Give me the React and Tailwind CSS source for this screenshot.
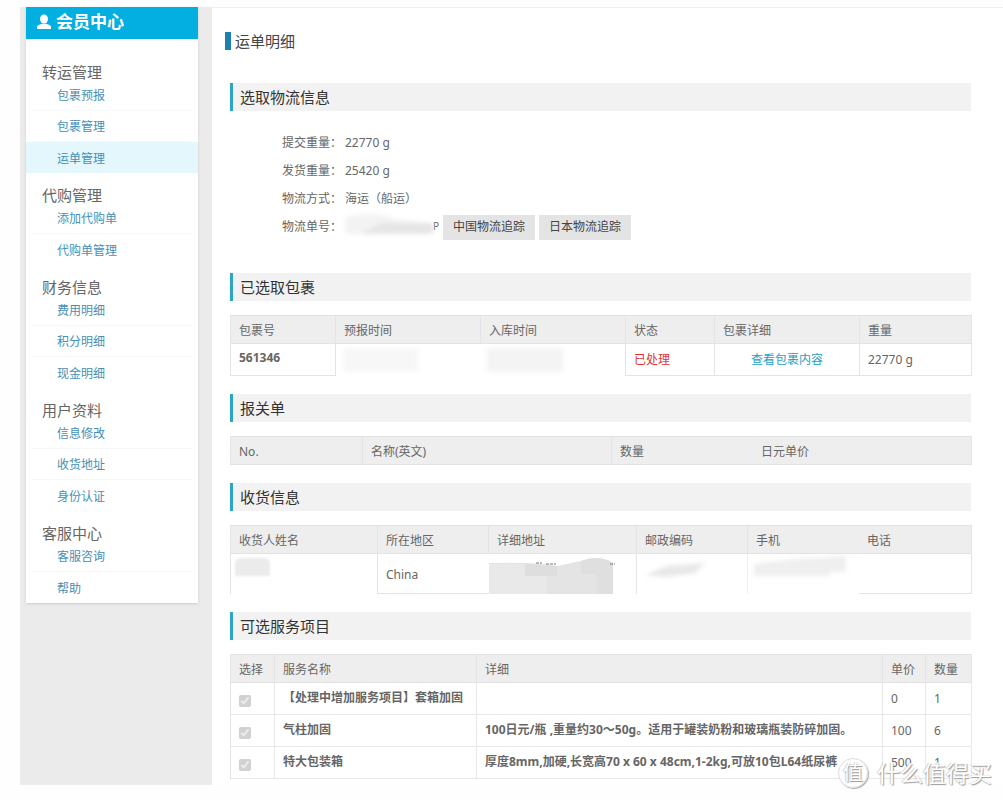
const menu = [
  { title: '转运管理', items: ['包裹预报', '包裹管理', '运单管理'] },
  { title: '代购管理', items: ['添加代购单', '代购单管理'] },
  { title: '财务信息', items: ['费用明细', '积分明细', '现金明细'] },
  { title: '用户资料', items: ['信息修改', '收货地址', '身份认证'] },
  { title: '客服中心', items: ['客服咨询', '帮助'] }
]

const services = [
  { name: '【处理中增加服务项目】套箱加固', detail: '', price: 0, count: 1 },
  { name: '气柱加固', detail: '100日元/瓶 ,重量约30～50g。适用于罐装奶粉和玻璃瓶装防碎加固。', price: 100, count: 6 },
  { name: '特大包装箱', detail: '厚度8mm,加硬,长宽高70 x 60 x 48cm,1-2kg,可放10包L64纸尿裤', price: 500, count: 1 }
]

export default function App() {
  return (
    <div className="relative min-h-screen overflow-hidden bg-[#fefefe] pt-[7px] pl-5 text-xs text-[#666] font-['Noto_Sans','Noto_Sans_CJK_SC',sans-serif]">
      <div className="flex">
        <Sidebar />
        <main className="min-w-0 flex-1 border-t border-[#f0f0f0] bg-white pr-8 pb-[6px] pl-[18px]">
          <h1 className="-ml-[5px] mt-6 flex h-[18px] items-center gap-1 text-[15px] text-[#444]">
            <span className="h-[18px] w-[6px] bg-[#1c80b0]" />
            运单明细
          </h1>

          <SectionTitle className="mt-[33px]">选取物流信息</SectionTitle>
          <Logistics />

          <SectionTitle className="mt-8">已选取包裹</SectionTitle>
          <Packages />

          <SectionTitle className="mt-[18px]">报关单</SectionTitle>
          <table className="mt-[14px] w-full table-fixed border-separate border-spacing-0 border-l border-[#e4e4e4]">
            <thead>
              <tr>
                <Th className="w-[132px]">No.</Th>
                <Th className="w-[249px]">名称(英文)</Th>
                <Th className="w-[141px] border-r-transparent">数量</Th>
                <Th className="w-[219px]">日元单价</Th>
              </tr>
            </thead>
          </table>

          <SectionTitle className="mt-[18px]">收货信息</SectionTitle>
          <Receiver />

          <SectionTitle className="mt-[18px]">可选服务项目</SectionTitle>
          <Services />
        </main>
      </div>
      <Watermark />
    </div>
  )
}

function Sidebar() {
  return (
    <aside className="w-48 shrink-0 bg-[#ebebeb] pr-[14px] pl-[6px]">
      <div className="bg-white shadow-sm">
        <div className="flex h-8 items-center gap-1 bg-[#03aee0] pb-[2px] pl-[10px] text-[17px] font-bold text-white">
          <svg viewBox="0 0 16 16" className="h-4 w-4" fill="currentColor" aria-hidden="true">
            <ellipse cx="8" cy="5" rx="4" ry="4.500" />
            <path d="M1 15v-2c0-1.500 2-2.400 5-3.200h4c3 .8 5 1.700 5 3.200v2z" />
          </svg>
          会员中心
        </div>
        <nav className="pt-[11px]">
          {menu.map((group) => (
            <section key={group.title}>
              <h2 className="pt-[15px] pl-4 text-[15px] leading-[15px] text-[#666]">{group.title}</h2>
              <ul>
                {group.items.map((item, index) => (
                  <li key={item} className={item === '运单管理' ? 'bg-[#e3f7fd]' : ''}>
                    <a
                      href="#"
                      className={`mx-[6px] flex h-[31px] items-center pt-[2px] pl-[25px] text-[#468fb5] ${
                        index < group.items.length - 1 ? 'border-b border-[#f6f8f9]' : ''
                      }`}
                    >
                      {item}
                    </a>
                  </li>
                ))}
              </ul>
            </section>
          ))}
        </nav>
      </div>
    </aside>
  )
}

function SectionTitle({ className, children }) {
  return (
    <h2 className={`flex h-7 items-center border-l-[3px] border-[#2da5c4] bg-[#f2f2f2] pl-[7px] text-[15px] text-[#333] ${className}`}>
      {children}
    </h2>
  )
}

function Logistics() {
  return (
    <dl className="mt-[18px] grid auto-rows-[28px] grid-cols-[63px_1fr] items-center pl-[52px]">
      <dt>提交重量：</dt>
      <dd>22770 g</dd>
      <dt>发货重量：</dt>
      <dd>25420 g</dd>
      <dt>物流方式：</dt>
      <dd>海运（船运）</dd>
      <dt>物流单号：</dt>
      <dd className="flex items-center gap-1">
        <span className="flex items-center">
          <svg viewBox="0 0 88 26" className="h-[26px] w-[88px] overflow-visible blur-[2px]" aria-hidden="true">
            <path d="M0 4Q25-4 48 4Q60 7 88 9V20H0z" fill="#f3f3f3" />
            <path d="M18 18L36 9H88V20H18z" fill="#e6e6e6" />
          </svg>
          <span className="w-[6px] text-[10px]">P</span>
        </span>
        <button type="button" className="h-[25px] bg-[#e4e4e4] px-[10px] text-[#444]">中国物流追踪</button>
        <button type="button" className="h-[25px] bg-[#e4e4e4] px-[10px] text-[#444]">日本物流追踪</button>
      </dd>
    </dl>
  )
}

function Th({ className, children }) {
  return (
    <th className={`h-[29px] border-y border-r border-y-[#e2e2e2] border-r-[#e4e4e4] bg-[#eee] px-2 pt-[2px] text-left font-normal whitespace-nowrap ${className}`}>
      {children}
    </th>
  )
}

function Packages() {
  return (
    <table className="mt-[14px] w-full table-fixed border-separate border-spacing-0 border-l border-[#e4e4e4]">
      <thead>
        <tr>
          <Th className="w-[105px]">包裹号</Th>
          <Th className="w-[145px]">预报时间</Th>
          <Th className="w-[145px]">入库时间</Th>
          <Th className="w-[89px]">状态</Th>
          <Th className="w-[145px]">包裹详细</Th>
          <Th className="w-[112px]">重量</Th>
        </tr>
      </thead>
      <tbody>
        <tr className="h-8">
          <td className="border-r border-b border-[#e4e4e4] px-2 pb-1 font-bold">561346</td>
          <td className="px-2">
            <div className="h-6 w-[74px] bg-[#f7f7f7] blur-[2px]" />
          </td>
          <td className="border-r border-[#e4e4e4] px-[6px]">
            <div className="h-6 w-[76px] bg-[#f5f4f4] blur-[2px]" />
          </td>
          <td className="border-r border-b border-[#e4e4e4] px-2 text-[#dd3333]">已处理</td>
          <td className="border-r border-b border-[#e4e4e4] text-center">
            <a href="#" className="text-[#1d9fc9]">查看包裹内容</a>
          </td>
          <td className="border-r border-b border-[#e4e4e4] px-2">22770 g</td>
        </tr>
      </tbody>
    </table>
  )
}

function Receiver() {
  return (
    <table className="mt-[14px] w-full table-fixed border-separate border-spacing-0 border-l border-[#e4e4e4]">
      <thead>
        <tr>
          <Th className="w-[147px]">收货人姓名</Th>
          <Th className="w-[111px]">所在地区</Th>
          <Th className="w-[148px]">详细地址</Th>
          <Th className="w-[111px]">邮政编码</Th>
          <Th className="w-[111px] border-r-transparent">手机</Th>
          <Th className="w-[113px]">电话</Th>
        </tr>
      </thead>
      <tbody>
        <tr className="h-10 align-top">
          <td className="border-r border-[#e4e4e4] px-1 pt-1">
            <div className="h-[18px] w-[35px] rounded-t-md bg-[#ebebeb] blur-[1px]" />
          </td>
          <td className="border-b border-[#e4e4e4] px-2 pt-[2px] align-middle">China</td>
          <td className="border-r border-[#e4e4e4]">
            <svg viewBox="0 0 126 40" className="block h-10 w-[126px]" aria-hidden="true">
              <path d="M0 9Q48 8 68 12L92 7Q110 0 124 9V40H0z" fill="#e4e4e4" />
              <path d="M0 10H36V22H58V40H0z" fill="#e9e9e9" />
              <path d="M36 10L68 12V22H36z" fill="#dedede" />
              <path d="M92 7Q110 0 124 9V40H108V20H92z" fill="#dfdfdf" />
              <path d="M47 9h6M57 10h10M121 10h5" stroke="#777" strokeWidth="1" strokeDasharray="3 1" />
            </svg>
          </td>
          <td className="border-r border-[#eee] px-2">
            <svg viewBox="0 0 60 24" className="h-6 w-[60px] blur-[2px]" aria-hidden="true">
              <path d="M0 21L22 12L60 9L50 19L22 23z" fill="#e8e8e8" />
            </svg>
          </td>
          <td className="px-[6px]">
            <svg viewBox="0 0 94 24" className="h-6 w-[94px] blur-[2px]" aria-hidden="true">
              <path d="M0 10L40 5L92 2V18H76V22H0z" fill="#efefef" />
            </svg>
          </td>
          <td className="border-r border-b border-[#e4e4e4]" />
        </tr>
      </tbody>
    </table>
  )
}

function Services() {
  return (
    <table className="mt-[14px] w-full table-fixed border-separate border-spacing-0 border-l border-[#e4e4e4]">
      <thead>
        <tr>
          <Th className="w-[44px]">选择</Th>
          <Th className="w-[202px]">服务名称</Th>
          <Th className="w-[406px]">详细</Th>
          <Th className="w-[43px]">单价</Th>
          <Th className="w-[46px]">数量</Th>
        </tr>
      </thead>
      <tbody>
        {services.map((service) => (
          <tr key={service.name} className="h-8">
            <td className="border-r border-b border-[#e8e8e8] px-2">
              <input type="checkbox" checked disabled readOnly aria-label={service.name} className="mt-1 block h-3 w-3" />
            </td>
            <td className="border-r border-b border-[#e8e8e8] px-2 pb-[2px] font-bold whitespace-nowrap">{service.name}</td>
            <td className="border-r border-b border-[#e8e8e8] px-2 pb-[2px] font-bold whitespace-nowrap">{service.detail}</td>
            <td className="border-r border-b border-[#e8e8e8] px-2">{service.price}</td>
            <td className="border-r border-b border-[#e8e8e8] px-2">{service.count}</td>
          </tr>
        ))}
      </tbody>
    </table>
  )
}

function Watermark() {
  return (
    <div className="pointer-events-none absolute top-[757px] right-[11px] flex items-center gap-[9px] text-white [text-shadow:1px_1px_1px_#999,-1px_0_1px_#ccc]">
      <span className="flex h-[30px] w-[30px] items-center justify-center rounded-full border border-[#ddd] bg-white/80 text-[20px] shadow-[1px_1px_1px_#aaa]">
        值
      </span>
      <span className="text-[23px] leading-8">什么值得买</span>
    </div>
  )
}
